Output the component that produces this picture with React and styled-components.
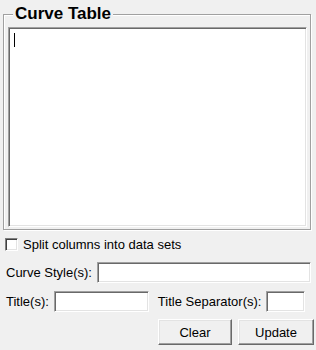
import React from "react";
import styled, { createGlobalStyle } from "styled-components";

const Global = createGlobalStyle`
  html, body { margin: 0; padding: 0; background: #f0f0f0; }
  body { font-family: "Liberation Sans", Arial, sans-serif; font-size: 13px; color: #000; }
  * { box-sizing: border-box; }
`;

const Panel = styled.div`
  width: 316px;
  height: 350px;
  background: #f0f0f0;
  display: flex;
  flex-direction: column;
`;

const Group = styled.fieldset`
  margin: 5px 5px 0 3px;
  padding: 4px 3px 2px 4px;
  width: 308px;
  border: 1px solid #a0a0a0;
  box-shadow: 1px 1px 0 #fff, inset 1px 1px 0 #fff;
`;

const Legend = styled.legend`
  margin-left: 5px;
  padding: 0 2px;
  background: #f0f0f0;
  font-weight: bold;
  font-size: 17px;
  line-height: 18px;
  color: #000;
`;

const TextWrap = styled.div`
  position: relative;
  display: flex;
`;

const TextArea = styled.textarea`
  display: block;
  width: 299px;
  height: 200px;
  resize: none;
  margin: 0;
  padding: 0;
  background: #fff;
  border-style: solid;
  border-width: 1px;
  border-color: #a0a0a0 #fff #fff #a0a0a0;
  box-shadow: inset 1px 1px 0 #696969, inset -1px -1px 0 #e3e3e3;
  outline: none;
  font-family: inherit;
`;

const Caret = styled.span`
  position: absolute;
  left: 6px;
  top: 6px;
  width: 1px;
  height: 14px;
  background: #000;
`;

const Body = styled.div`
  display: flex;
  flex-direction: column;
  padding: 7px 4px 0 6px;
`;

const CheckRow = styled.label`
  display: flex;
  align-items: center;
  gap: 5px;
  height: 15px;
  margin-left: -1px;
`;

const Box = styled.span`
  width: 13px;
  height: 13px;
  background: #fff;
  border-style: solid;
  border-width: 1px;
  border-color: #808080 #fff #fff #808080;
  box-shadow: inset 1px 1px 0 #404040, inset -1px -1px 0 #e3e3e3;
`;

const FieldRow = styled.div`
  display: flex;
  align-items: center;
  height: 21px;
  margin-top: ${(p) => p.$mt}px;
`;

const Label = styled.span`
  white-space: nowrap;
  margin-right: ${(p) => p.$gap}px;
  margin-left: ${(p) => p.$ml || 0}px;
`;

const Input = styled.input`
  width: ${(p) => p.$w}px;
  height: 21px;
  margin: 0;
  padding: 0 2px;
  background: #fff;
  border-style: solid;
  border-width: 1px;
  border-color: #a0a0a0 #fff #fff #a0a0a0;
  box-shadow: inset 1px 1px 0 #696969, inset -1px -1px 0 #e3e3e3;
  outline: none;
  font-family: inherit;
  font-size: 13px;
`;

const Buttons = styled.div`
  display: flex;
  justify-content: flex-end;
  gap: 6px;
  margin-top: 7px;
  margin-right: -2px;
`;

const Button = styled.button`
  width: ${(p) => p.$w}px;
  height: 26px;
  margin: 0;
  padding: 0;
  background: #f0f0f0;
  border-style: solid;
  border-width: 1px;
  border-color: #fff #696969 #696969 #fff;
  box-shadow: inset -1px -1px 0 #a0a0a0, inset 1px 1px 0 #e3e3e3;
  font-family: inherit;
  font-size: 13px;
  color: #000;
`;

export default function App() {
  return (
    <>
      <Global />
      <Panel>
        <Group>
          <Legend>Curve Table</Legend>
          <TextWrap>
            <TextArea />
            <Caret />
          </TextWrap>
        </Group>
        <Body>
          <CheckRow>
            <Box />
            <span>Split columns into data sets</span>
          </CheckRow>
          <FieldRow $mt={10}>
            <Label $gap={5}>Curve Style(s):</Label>
            <Input $w={214} />
          </FieldRow>
          <FieldRow $mt={8}>
            <Label $gap={5}>Title(s):</Label>
            <Input $w={95} />
            <Label $ml={9} $gap={5}>Title Separator(s):</Label>
            <Input $w={39} />
          </FieldRow>
          <Buttons>
            <Button $w={74}>Clear</Button>
            <Button $w={76}>Update</Button>
          </Buttons>
        </Body>
      </Panel>
    </>
  );
}
